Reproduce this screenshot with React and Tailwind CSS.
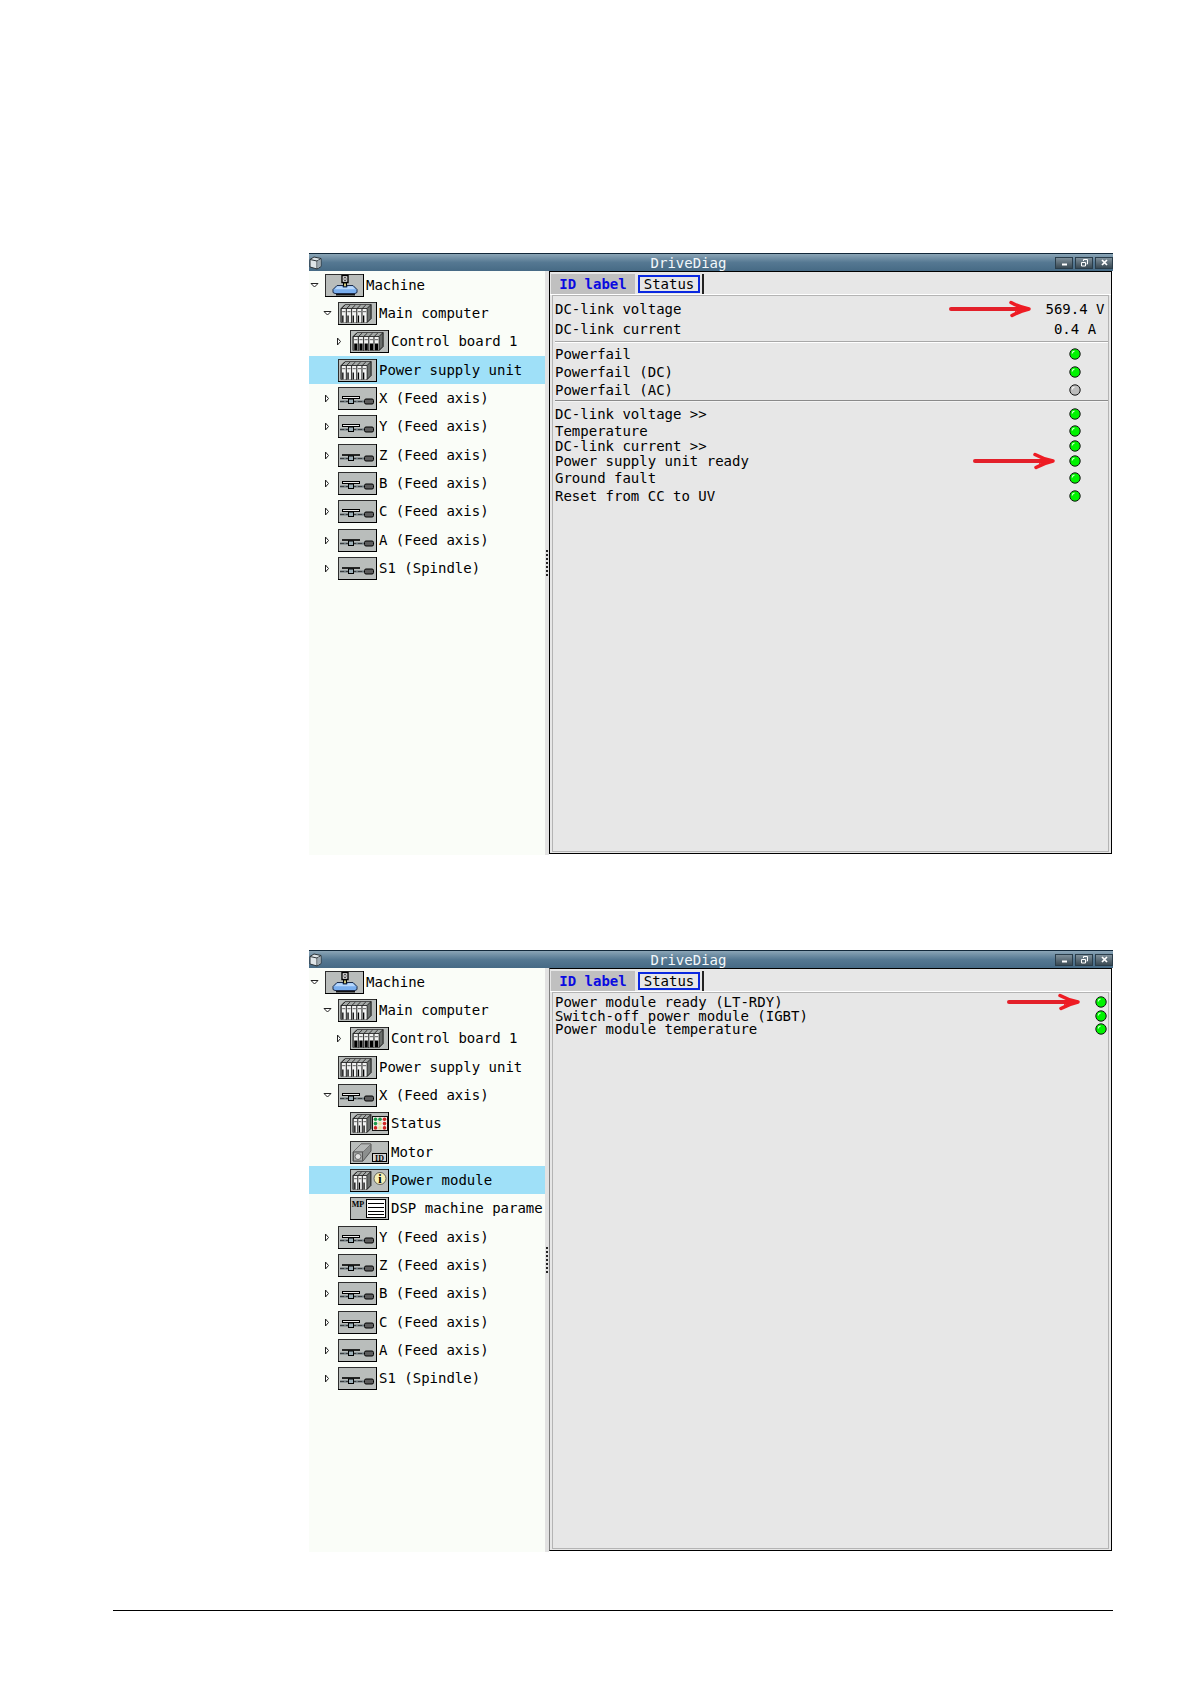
import React from "react";

function IconBox({ children }) {
  return (
    <svg width="39" height="23" viewBox="0 0 39 23" className="shrink-0" aria-hidden="true">
      <rect x="0.5" y="0.5" width="38" height="22" fill="#b9bdbb" stroke="#2e2e2e" />
      <path d="M0 22.5H39M38.5 0V23" stroke="#000" />
      {children}
    </svg>
  );
}

function MachineIcon() {
  return (
    <IconBox>
      <path d="M17 1.500h6v7h-6z" fill="#f4f4f4" stroke="#000" strokeWidth="1.400" />
      <path d="M19 3.500h2v3h-2z" fill="#fff" stroke="#333" strokeWidth="0.800" />
      <path d="M18.500 9h3v4h-3z" fill="#c9c27a" stroke="#000" />
      <path d="M12 11.500h6v1.500h4v-1.500h6l4 4v3l-2 1H10l-2-1v-3z" fill="#79aeee" stroke="#1b2b4a" />
      <path d="M12.500 12.200h5v1.500h5v-1.500h5l3 3h-21z" fill="#b9d8fb" />
      <path d="M11 20h19v1.500H11z" fill="#111" />
    </IconBox>
  );
}

function Rack({ count, pitch = 5.2, dark }) {
  const end = 3 + count * pitch;
  const slots = Array.from({ length: count }, (_, i) => 3 + i * pitch);
  return (
    <g>
      <path d={`M3 6.500L7 2.500H${end + 4}V16.500L${end} 20.500H3z`} fill="#a4a8a6" stroke="#333" strokeWidth="0.8" />
      <path d={`M${end} 6.500L${end + 4} 2.500V16.500L${end} 20.500z`} fill="#6b6f6d" stroke="#111" strokeWidth="0.8" />
      {slots.map((x, i) => (
        <g key={i}>
          <path d={`M${x + 0.4} 6.500L${x + 4} 3`} stroke="#222" strokeWidth="0.9" />
          <rect x={x + 0.5} y="6.500" width={pitch - 1} height="14" fill="#f2f3f2" />
          <path d={`M${x + 0.2} 6.500V20.500M${x} 6.500h${pitch}`} stroke="#111" strokeWidth="0.8" />
          <rect x={x + 1.2} y="9" width={pitch - 2} height="1.2" fill="#777" />
          <rect x={x + 1.2} y="13.500" width={dark ? pitch - 2 : 1.3} height="7" fill="#000" />
        </g>
      ))}
    </g>
  );
}

function AxisIcon({ thin }) {
  return (
    <IconBox>
      <path d="M2 14.500h24" stroke="#69757a" strokeWidth="2" />
      <path d="M2 14.500h24" stroke="#222" strokeWidth="0.7" strokeDasharray="4 2" />
      {thin ? (
        <path d="M4 11h18" stroke="#000" strokeWidth="1.6" />
      ) : (
        <rect x="4.500" y="9.500" width="17" height="2" fill="#eee" stroke="#000" />
      )}
      <rect x="10.500" y="12" width="5" height="4.500" fill="#9db0b8" stroke="#000" />
      <rect x="26.500" y="12" width="9" height="5" rx="1.500" fill="#5d5d5d" stroke="#000" />
    </IconBox>
  );
}

function StatusIcon() {
  const colors = ["#1c9a4a", "#1c9a4a", "#d02525", "#1c9a4a", "#e8e0a0", "#d02525", "#d02525", "#e8e0a0", "#d02525"];
  return (
    <IconBox>
      <Rack count={3} pitch={4.6} />
      <rect x="22.500" y="4.500" width="15" height="14" fill="#f1ece4" stroke="#111" />
      {colors.map((c, i) => (
        <circle key={i} cx={25.5 + (i % 3) * 4.5} cy={7.3 + Math.floor(i / 3) * 4.3} r="1.800" fill={c} />
      ))}
    </IconBox>
  );
}

function MotorIcon() {
  return (
    <IconBox>
      <path d="M3 11L11 3h10v7l-8 10H3z" fill="#8c8f8e" stroke="#555" />
      <path d="M3 11L11 3h10l-8 8z" fill="#b5b8b7" stroke="#666" strokeWidth="0.7" />
      <rect x="3.500" y="11" width="9" height="9" fill="#a9acab" stroke="#555" />
      <circle cx="8" cy="15.500" r="3" fill="#e2e2e2" stroke="#666" />
      <rect x="22.500" y="12.500" width="14" height="8" fill="#d5d5d5" stroke="#000" />
      <text x="29.500" y="19.500" textAnchor="middle" fontSize="8" fontWeight="bold" fontFamily="Liberation Serif, serif">ID</text>
    </IconBox>
  );
}

function ModuleIcon() {
  return (
    <IconBox>
      <Rack count={3} pitch={4.6} />
      <circle cx="30" cy="9.500" r="6" fill="#f6f0b4" stroke="#444" strokeWidth="0.8" />
      <text x="30" y="13.500" textAnchor="middle" fontSize="12" fontWeight="bold" fontFamily="Liberation Serif, serif">i</text>
    </IconBox>
  );
}

function ParameterIcon() {
  return (
    <IconBox>
      <text x="8" y="10" textAnchor="middle" fontSize="8" fontWeight="bold" fontFamily="Liberation Serif, serif">MP</text>
      <rect x="16.500" y="2.500" width="19" height="18" fill="#fff" stroke="#000" />
      <path d="M18 6.500h16M18 10.500h16M18 14.500h16M18 17.500h16" stroke="#000" />
    </IconBox>
  );
}

const icons = {
  machine: <MachineIcon />,
  rack: <IconBox><Rack count={5} /></IconBox>,
  board: <IconBox><Rack count={5} dark /></IconBox>,
  axis: <AxisIcon />,
  axisThin: <AxisIcon thin />,
  status: <StatusIcon />,
  motor: <MotorIcon />,
  module: <ModuleIcon />,
  parameter: <ParameterIcon />,
};

const indents = ["pl-0", "pl-[13px]", "pl-[25px]"];

function TreeItem({ label, icon, level, open, selected }) {
  const hasToggle = open !== undefined;
  return (
    <li
      role="treeitem"
      aria-level={level + 1}
      aria-selected={!!selected}
      aria-expanded={open}
      className={`flex h-7 items-center overflow-hidden nth-[3n]:mb-px ${indents[level]} ${selected ? "bg-[#9fe0f8]" : ""}`}
    >
      <span className="flex w-4 shrink-0 items-center pl-px">
        {hasToggle && (
          <button type="button" aria-label={`Toggle ${label}`} className="block">
            <svg width="9" height="9" viewBox="0 0 9 9" fill="#fff" stroke="#222">
              {open ? <path d="M1 2.500h7L4.500 6z" /> : <path d="M2.500 1v7L5.500 4.500z" />}
            </svg>
          </button>
        )}
      </span>
      {icons[icon]}
      <span className="ml-[2px] whitespace-pre">{label}</span>
    </li>
  );
}

function Led({ on = true, label }) {
  return (
    <svg width="12" height="12" viewBox="0 0 12 12" role="img" aria-label={`${label}: ${on ? "on" : "off"}`}>
      <circle cx="6" cy="6" r="5.200" fill={on ? "#00f400" : "#bdbdbd"} stroke="#141414" />
      <path d="M3.200 5.500A2.500 2.500 0 0 1 5.500 3.200" fill="none" stroke={on ? "#c8ffc8" : "#f4f4f4"} strokeWidth="1.200" />
    </svg>
  );
}

function Arrow({ length = 82, className }) {
  const tip = length - 2;
  return (
    <svg width={length} height="18" viewBox={`0 0 ${length} 18`} className={`absolute top-1/2 -translate-y-1/2 ${className}`} aria-hidden="true">
      <path d={`M2 9H${tip - 2}`} stroke="#e3202a" strokeWidth="4" strokeLinecap="round" />
      <path d={`M${tip - 18} 2.500Q${tip - 10} 7 ${tip} 9Q${tip - 9} 11 ${tip - 17} 15.500`} fill="none" stroke="#ee1c24" strokeWidth="3.500" strokeLinecap="round" strokeLinejoin="round" />
      <path d={`M${tip - 14} 7l14 2-14 3z`} fill="#ee1c24" />
    </svg>
  );
}

function Row({ label, value, on, height, column, arrow, arrowLength }) {
  return (
    <div className={`relative flex items-center justify-between ${height}`}>
      <dt>{label}</dt>
      <dd className={`flex justify-center whitespace-pre ${column}`}>{value ?? <Led on={on} label={label} />}</dd>
      {arrow && <Arrow className={arrow} length={arrowLength} />}
    </div>
  );
}

function TitleButton({ label, children }) {
  return (
    <button type="button" aria-label={label} className="flex h-3 w-[18px] items-center justify-center border border-[#2a3d4a] bg-linear-to-b from-[#7f909b] to-[#3a4a54]">
      <svg width="9" height="9" viewBox="0 0 9 9" fill="none" stroke="#fff">{children}</svg>
    </button>
  );
}

function DriveWindow({ tree, edge, children }) {
  return (
    <section className="flex min-h-[602px] flex-col">
      <header className="flex h-[18px] items-center border-t border-[#12283a] bg-linear-to-b from-[#8ba5b6] via-[#557892] to-[#466a85]">
        <svg width="13" height="14" viewBox="0 0 13 14" className="shrink-0" aria-hidden="true">
          <path d="M1 3.500L5 1l7 1.500v8L8 13l-7-2z" fill="#dfe5e8" stroke="#2b3338" />
          <path d="M1 3.500l7 1.500 4-2.500M8 5v8" fill="none" stroke="#2b3338" />
          <path d="M8.500 5.200l3-2v7l-3 2z" fill="#9eaab2" />
        </svg>
        <h2 className="flex-1 text-center text-[#f2f7fa]">DriveDiag</h2>
        <div className="flex gap-[2px]">
          <TitleButton label="Minimize"><path d="M2 6.500h5" strokeWidth="2" /></TitleButton>
          <TitleButton label="Restore">
            <path d="M1.500 4.500h4v3.500h-4zM3.500 3V1.500h4V6H6.500" />
          </TitleButton>
          <TitleButton label="Close"><path d="M2 2l5 5M7 2L2 7" strokeWidth="1.700" /></TitleButton>
        </div>
      </header>
      <div className="flex flex-1">
        <ul role="tree" className="w-[236px] shrink-0 bg-[#fafdf8]">
          {tree.map((item) => <TreeItem key={item.label} {...item} />)}
        </ul>
        <div className="flex w-1 shrink-0 items-center justify-center bg-[#e2e2e2]">
          <div className="h-[26px] w-0 border-l-2 border-dotted border-[#222]" />
        </div>
        <div className={`mr-px mb-px flex flex-1 flex-col border border-black bg-[#e7e7e7] ${edge}`}>
          <div role="tablist" className="flex h-[23px] items-stretch gap-px border-b border-white pt-[2px] pl-px">
            <button type="button" role="tab" aria-selected="false" className="w-[84px] bg-[#c0c0c0] font-bold text-[#0a0ae0]">ID label</button>
            <button type="button" role="tab" aria-selected="true" className="w-[68px] border-r-2 border-[#222] pr-[2px] pl-[2px]">
              <span className="block border-2 border-[#0a28e0] leading-[14px]">Status</span>
            </button>
          </div>
          <div className="mx-[2px] mb-px flex-1 border border-[#b4b4b4] pl-[2px]">{children}</div>
        </div>
      </div>
    </section>
  );
}

const axis = (name, icon, extra) => ({ label: `${name} (Feed axis)`, icon, level: 1, open: false, ...extra });

const head = [
  { label: "Machine", icon: "machine", level: 0, open: true },
  { label: "Main computer", icon: "rack", level: 1, open: true },
  { label: "Control board 1", icon: "board", level: 2, open: false },
];

const tail = [
  axis("Y", "axis"),
  axis("Z", "axisThin"),
  axis("B", "axis"),
  axis("C", "axis"),
  axis("A", "axisThin"),
  { label: "S1 (Spindle)", icon: "axisThin", level: 1, open: false },
];

const supplyTree = [
  ...head,
  { label: "Power supply unit", icon: "rack", level: 1, selected: true },
  axis("X", "axis"),
  ...tail,
];

const moduleTree = [
  ...head,
  { label: "Power supply unit", icon: "rack", level: 1 },
  axis("X", "axis", { open: true }),
  { label: "Status", icon: "status", level: 2 },
  { label: "Motor", icon: "motor", level: 2 },
  { label: "Power module", icon: "module", level: 2, selected: true },
  { label: "DSP machine parame", icon: "parameter", level: 2 },
  ...tail,
];

const wide = "w-16";
const narrow = "w-[14px]";

export default function App() {
  return (
    <main className="bg-white pt-[253px] pr-[77px] pb-[73px] pl-[113px] font-['DejaVu_Sans_Mono','Liberation_Mono',monospace] text-[14px] leading-[14px] text-black">
      <div className="mb-[58px] ml-[196px] flex flex-col gap-[95px]">
        <DriveWindow tree={supplyTree} edge="border-l-black">
          <dl className="pt-[3px] pr-px">
            <Row label="DC-link voltage" value="569.4 V" height="h-5" column={wide} arrow="right-[76px]" />
            <Row label="DC-link current" value="0.4 A" height="h-5" column={wide} />
          </dl>
          <hr className="mt-[2px] border-t border-b border-t-[#a8a8a8] border-b-white" />
          <dl className="pt-[2px] pr-px">
            <Row label="Powerfail" height="h-[18px]" column={wide} />
            <Row label="Powerfail (DC)" height="h-[18px]" column={wide} />
            <Row label="Powerfail (AC)" on={false} height="h-[18px]" column={wide} />
          </dl>
          <hr className="mt-px border-t border-b border-t-[#8a8a8a] border-b-[#f4f4f4]" />
          <dl className="pt-[3px] pr-px">
            <Row label="DC-link voltage >>" height="h-[18px]" column={wide} />
            <Row label="Temperature" height="h-4" column={wide} />
            <Row label="DC-link current >>" height="h-[14px]" column={wide} />
            <Row label="Power supply unit ready" height="h-4" column={wide} arrow="right-[52px]" />
            <Row label="Ground fault" height="h-[18px]" column={wide} />
            <Row label="Reset from CC to UV" height="h-[18px]" column={wide} />
          </dl>
        </DriveWindow>
        <DriveWindow tree={moduleTree} edge="border-l-[#808080]">
          <dl className="pt-[2px]">
            <Row label="Power module ready (LT-RDY)" height="h-[14px]" column={narrow} arrow="right-[28px]" arrowLength={73} />
            <Row label="Switch-off power module (IGBT)" height="h-[13px]" column={narrow} />
            <Row label="Power module temperature" height="h-[14px]" column={narrow} />
          </dl>
        </DriveWindow>
      </div>
      <hr className="border-t border-black" />
    </main>
  );
}
